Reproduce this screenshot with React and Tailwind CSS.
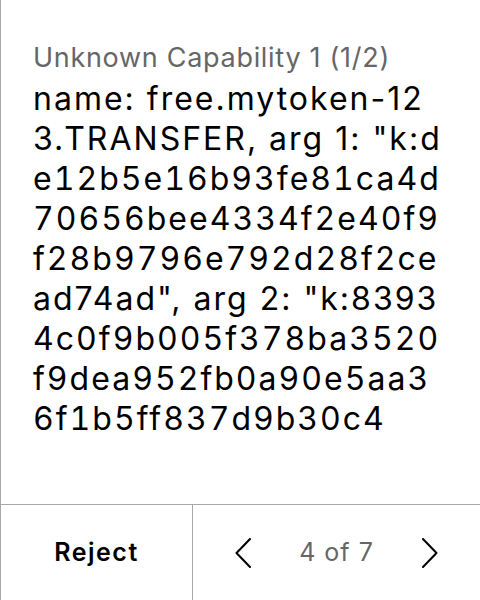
const lines = [
  { t: 'name: free.mytoken-12', tab: false },
  { t: '3.TRANSFER, arg 1: "k:d', tab: false },
  { t: 'e12b5e16b93fe81ca4d', tab: true },
  { t: '70656bee4334f2e40f9', tab: true },
  { t: 'f28b9796e792d28f2ce', tab: true },
  { t: 'ad74ad", arg 2: "k:8393', tab: false },
  { t: '4c0f9b005f378ba3520', tab: true },
  { t: 'f9dea952fb0a90e5aa3', tab: true },
  { t: '6f1b5ff837d9b30c4', tab: true },
];

export default function App() {
  return (
    <div
      className="h-[600px] w-[480px] flex flex-col bg-white border-l border-[#a8a8a8]"
      style={{ fontFamily: 'Inter, "Noto Sans", sans-serif' }}
    >
      <div className="flex-1 px-8 pt-[42px]">
        <div className="text-[27px] leading-[32px] tracking-[0.7px] text-[#666666] whitespace-nowrap">Unknown Capability 1 (1/2)</div>
        <div className="mt-[5px] text-[32px] leading-[40px] tracking-[2px] text-black">
          {lines.map((l, i) => (
            <div key={i} className={l.tab ? 'whitespace-nowrap tabular-nums' : 'whitespace-nowrap'}>
              {l.t}
            </div>
          ))}
        </div>
      </div>
      <div className="h-[96px] flex border-t border-[#a8a8a8]">
        <div className="w-[192px] border-r border-[#a8a8a8] flex items-center justify-center text-[25px] font-semibold tracking-[1.5px] text-black">
          Reject
        </div>
        <div className="flex-1 flex items-center justify-between px-[42px]">
          <svg width="16" height="30" viewBox="0 0 16 30" fill="none">
            <path d="M15 1 L1.5 15 L15 29" stroke="black" strokeWidth="2" strokeLinecap="round" strokeLinejoin="round" />
          </svg>
          <span className="text-[25px] tracking-[1px] text-[#666666]">4 of 7</span>
          <svg width="16" height="30" viewBox="0 0 16 30" fill="none">
            <path d="M1 1 L14.5 15 L1 29" stroke="black" strokeWidth="2" strokeLinecap="round" strokeLinejoin="round" />
          </svg>
        </div>
      </div>
    </div>
  );
}
